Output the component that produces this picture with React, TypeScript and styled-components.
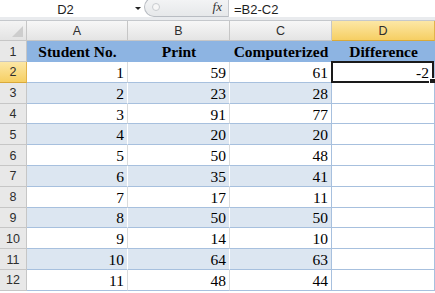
import React from 'react'
import styled, { createGlobalStyle } from 'styled-components'

const GlobalStyle = createGlobalStyle`
  html, body {
    margin: 0;
    padding: 0;
    background: #ffffff;
    overflow: hidden;
  }
`

const rows = [
  [1, 59, 61],
  [2, 23, 28],
  [3, 91, 77],
  [4, 20, 20],
  [5, 50, 48],
  [6, 35, 41],
  [7, 17, 11],
  [8, 50, 50],
  [9, 14, 10],
  [10, 64, 63],
  [11, 48, 44],
]

const Window = styled.div`
  width: 435px;
  height: 293px;
  overflow: hidden;
  background: #ffffff;
`

const FormulaBar = styled.div`
  display: flex;
  align-items: stretch;
  height: 17px;
  background: #ffffff;
  font-family: 'Liberation Sans', Arial, sans-serif;
  font-size: 13px;
  color: #1e1e1e;
`

const NameBox = styled.div`
  width: 131px;
  display: flex;
  align-items: center;
  justify-content: center;
  padding-top: 1px;
`

const DropArrow = styled.div`
  width: 13px;
  display: flex;
  align-items: center;
  justify-content: center;

  &::after {
    content: '';
    border-left: 3px solid transparent;
    border-right: 3px solid transparent;
    border-top: 3px solid #222;
  }
`

const FxControl = styled.div`
  width: 84px;
  display: flex;
  align-items: center;
  justify-content: space-between;
  margin-top: -3px;
  padding: 0 6px 0 7px;
  box-sizing: border-box;
  border: 1px solid #b9bdc3;
  border-right: none;
  border-radius: 12px 0 0 12px;
  background: linear-gradient(#f4f5f6, #e6e8ea);
`

const Knob = styled.div`
  width: 6px;
  height: 6px;
  border-radius: 50%;
  border: 1px solid #c9ccd0;
  background: #f7f7f7;
`

const Fx = styled.span`
  font-family: 'Liberation Serif', 'Times New Roman', serif;
  font-style: italic;
  font-size: 13px;
  color: #333;
`

const FormulaText = styled.div`
  flex: 1;
  display: flex;
  align-items: center;
  padding-left: 5px;
  padding-top: 1px;
  border-left: 1px solid #c6c9ce;
`

const Gap = styled.div`
  height: 3px;
  background: #e9ebee;
  border-bottom: 1px solid #c5c8cc;
`

const Sheet = styled.div`
  display: grid;
  grid-template-columns: 27px 101px 102px 102px 103px;
  grid-template-rows: 20px 21px repeat(11, 20.8px);
`

const Corner = styled.div`
  position: relative;
  box-sizing: border-box;
  background: linear-gradient(#f4f4f4, #e3e3e3);
  border-right: 1px solid #c6c6c6;
  border-bottom: 1px solid #c6c6c6;

  &::after {
    content: '';
    position: absolute;
    right: 3px;
    bottom: 3px;
    border-left: 11px solid transparent;
    border-bottom: 11px solid #cdcdcd;
  }
`

const ColHead = styled.div<{ $active?: boolean }>`
  box-sizing: border-box;
  display: flex;
  align-items: center;
  justify-content: center;
  padding-top: 1px;
  font-family: 'Liberation Sans', Arial, sans-serif;
  font-size: 12.5px;
  color: #2e2e2e;
  background: ${p => (p.$active ? 'linear-gradient(#fce7a6, #f6cf63)' : 'linear-gradient(#f7f7f7, #e4e4e4)')};
  border-right: 1px solid ${p => (p.$active ? '#e2b34b' : '#c6c6c6')};
  border-bottom: 1px solid ${p => (p.$active ? '#d9a93a' : '#c6c6c6')};
`

const RowHead = styled.div<{ $active?: boolean }>`
  box-sizing: border-box;
  display: flex;
  align-items: center;
  justify-content: center;
  padding-top: 1px;
  font-family: 'Liberation Sans', Arial, sans-serif;
  font-size: 12.5px;
  color: #2e2e2e;
  background: ${p => (p.$active ? 'linear-gradient(#fce7a6, #f6cf63)' : '#e8e8e8')};
  border-right: 1px solid ${p => (p.$active ? '#e2b34b' : '#c6c6c6')};
  border-bottom: 1px solid ${p => (p.$active ? '#d9a93a' : '#c6c6c6')};
`

const TitleCell = styled.div`
  box-sizing: border-box;
  display: flex;
  align-items: center;
  justify-content: center;
  padding-top: 2px;
  background: #8db4e2;
  border-bottom: 1px solid #8db4e2;
  font-family: 'Liberation Serif', 'Times New Roman', serif;
  font-weight: bold;
  font-size: 15.5px;
  color: #000;
`

const Cell = styled.div<{ $band?: boolean; $edge?: boolean }>`
  position: relative;
  box-sizing: border-box;
  display: flex;
  align-items: center;
  justify-content: flex-end;
  padding: 2px 3px 0 0;
  font-family: 'Liberation Serif', 'Times New Roman', serif;
  font-size: 15.5px;
  color: #000;
  background: ${p => (p.$band ? '#dce6f1' : '#ffffff')};
  border-bottom: 1px solid #a7c0de;
  border-right: 1px solid ${p => (p.$edge ? '#a7c0de' : p.$band ? '#ffffff' : '#dadcdd')};
`

const Selection = styled.div`
  position: absolute;
  left: -1px;
  top: -1px;
  right: 0;
  bottom: -1px;
  border: 2px solid #1a1a1a;
  pointer-events: none;

  &::after {
    content: '';
    position: absolute;
    right: -4px;
    bottom: -4px;
    width: 5px;
    height: 5px;
    background: #1a1a1a;
    border: 1px solid #ffffff;
  }
`

const SelectedValue = styled.span`
  position: relative;
  z-index: 1;
  padding-right: 2px;
`

export default function App() {
  return (
    <Window>
      <GlobalStyle />
      <FormulaBar>
        <NameBox>D2</NameBox>
        <DropArrow />
        <FxControl>
          <Knob />
          <Fx>fx</Fx>
        </FxControl>
        <FormulaText>=B2-C2</FormulaText>
      </FormulaBar>
      <Gap />
      <Sheet>
        <Corner />
        <ColHead>A</ColHead>
        <ColHead>B</ColHead>
        <ColHead>C</ColHead>
        <ColHead $active>D</ColHead>

        <RowHead>1</RowHead>
        <TitleCell>Student No.</TitleCell>
        <TitleCell>Print</TitleCell>
        <TitleCell>Computerized</TitleCell>
        <TitleCell>Difference</TitleCell>

        {rows.map((r, i) => {
          const band = i % 2 === 1
          return (
            <React.Fragment key={i}>
              <RowHead $active={i === 0}>{i + 2}</RowHead>
              <Cell $band={band}>{r[0]}</Cell>
              <Cell $band={band}>{r[1]}</Cell>
              <Cell $band={band} $edge>{r[2]}</Cell>
              <Cell $edge>
                {i === 0 && (
                  <>
                    <SelectedValue>{r[1] - r[2]}</SelectedValue>
                    <Selection />
                  </>
                )}
              </Cell>
            </React.Fragment>
          )
        })}
      </Sheet>
    </Window>
  )
}
